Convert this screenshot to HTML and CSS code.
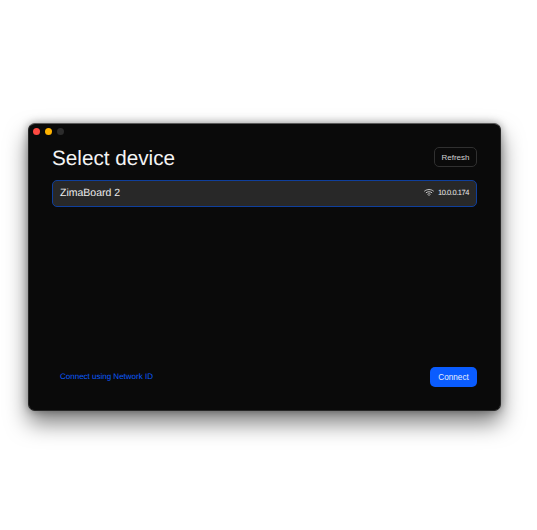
FILE: index.html
```html
<!DOCTYPE html>
<html lang="en">
<head>
<meta charset="utf-8">
<title>Select device</title>
<link rel="stylesheet" href="styles.css">
</head>
<body>
<main class="window">
  <div class="traffic">
    <span class="dot red"></span>
    <span class="dot yellow"></span>
    <span class="dot off"></span>
  </div>
  <header class="head">
    <h1 class="title">Select device</h1>
    <button class="refresh">Refresh</button>
  </header>
  <div class="device">
    <span class="name">ZimaBoard 2</span>
    <span class="net">
      <svg class="wifi" width="10" height="7" viewBox="0 0 10 7" fill="none" stroke="#d8d8d8" stroke-width=".9" stroke-linecap="round">
        <path d="M.6 2C3 0 7 0 9.400 2"/>
        <path d="M2.200 3.600C3.800 2.400 6.200 2.400 7.800 3.600"/>
        <path d="M3.800 5.100C4.500 4.600 5.500 4.600 6.200 5.100"/>
        <circle cx="5" cy="6.300" r=".55" fill="#d8d8d8" stroke="none"/>
      </svg>
      <span class="ip">10.0.0.174</span>
    </span>
  </div>
  <footer class="foot">
    <a class="link">Connect using Network ID</a>
    <button class="connect">Connect</button>
  </footer>
</main>
</body>
</html>
```
FILE: styles.css
```css
html, body { margin: 0; height: 100%; background: #fff; }
body {
  padding: 123px 36px 0 28px;
  box-sizing: border-box;
  font-family: "Liberation Sans", Arial, sans-serif;
  text-rendering: geometricPrecision;
  overflow: hidden;
}
.window {
  width: 473px;
  height: 288px;
  box-sizing: border-box;
  background: #0a0a0a;
  border-radius: 7px;
  border: 1px solid #262626;
  border-top-color: #5a5a5a;
  box-shadow: 0 12px 22px rgba(0,0,0,.5), 0 0 8px rgba(0,0,0,.35);
  padding: 4px 23px 22px 4px;
  display: flex;
  flex-direction: column;
}
.traffic { display: flex; gap: 5px; height: 7px; }
.dot { width: 7px; height: 7px; border-radius: 50%; }
.red { background: #ff4a42; }
.yellow { background: #ffb300; }
.off { background: #2c2c2c; }
.head {
  display: flex;
  justify-content: space-between;
  align-items: center;
  margin: 8px 0 0 19px;
  height: 30px;
}
.title {
  margin: 0;
  padding-top: 1px;
  font-size: 20.700px;
  font-weight: 400;
  color: #f4f4f4;
}
.refresh {
  width: 43px;
  height: 20px;
  margin-bottom: 2px;
  padding: 0;
  background: #0a0a0a;
  border: 1px solid #303030;
  border-radius: 5px;
  color: #d0d0d0;
  font: 400 8px "Liberation Sans", Arial, sans-serif;
}
.device {
  margin: 7px 0 0 19px;
  height: 27px;
  box-sizing: border-box;
  background: #282828;
  border: 1px solid #0f3f9c;
  border-radius: 5px;
  padding: 0 7px 2px;
  display: flex;
  justify-content: space-between;
  align-items: center;
}
.name { font-size: 10.500px; color: #ededed; }
.net { display: flex; align-items: center; gap: 4px; }
.ip { font-size: 7.500px; color: #e8e8e8; letter-spacing: -.45px; }
.foot {
  margin: auto 0 0 19px;
  display: flex;
  justify-content: space-between;
  align-items: center;
  padding: 0 0 1px 8px;
}
.link { font-size: 8px; color: #0a5cff; margin-top: -1px; }
.connect {
  width: 47px;
  height: 20px;
  padding: 0;
  background: #0a5cff;
  border: 0;
  border-radius: 5px;
  color: #e8effc;
  font: 400 8.200px "Liberation Sans", Arial, sans-serif;
}
```
